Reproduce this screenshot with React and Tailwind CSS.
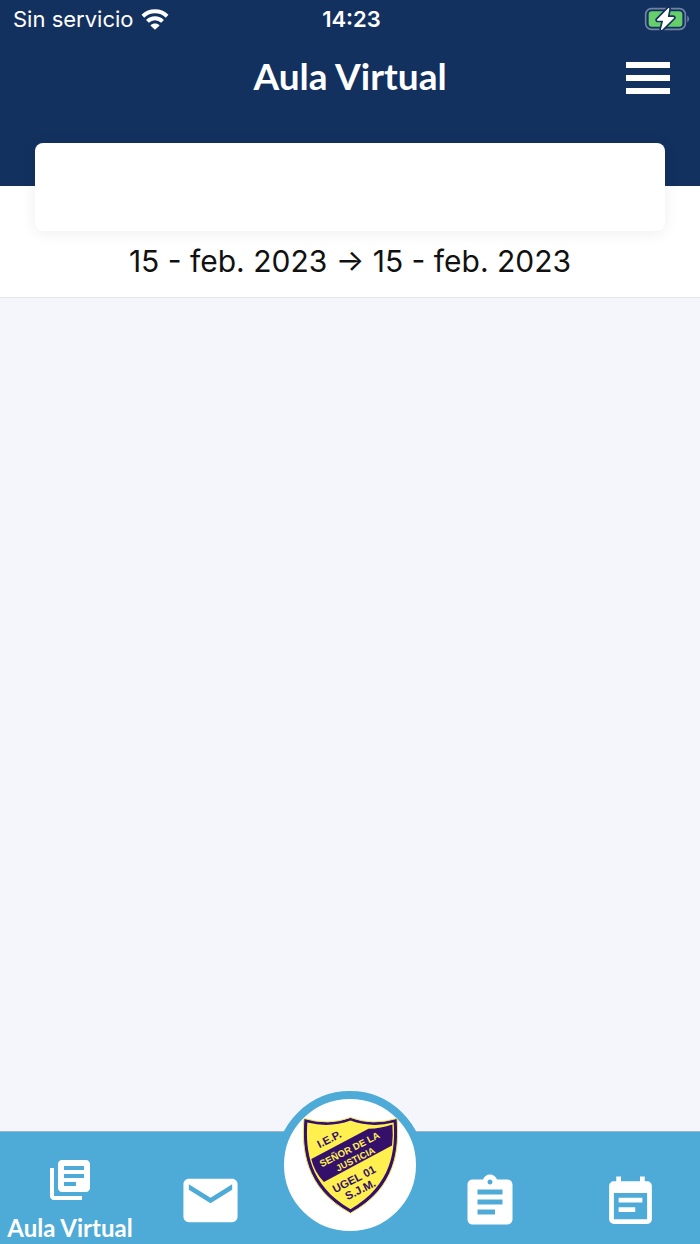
import { MdAssignment, MdEmail, MdEventNote, MdLibraryBooks } from "react-icons/md";

function WifiIcon() {
  return (
    <svg viewBox="0 0 84 64" className="w-7 h-[21px]" aria-hidden="true">
      <g fill="none" stroke="#fff" strokeWidth="12">
        <path d="M5 22C26 2 58 2 79 22" />
        <path d="M19 38C32 25 52 25 65 38" />
      </g>
      <path d="M42 63L28 50C36 42 48 42 56 50Z" fill="#fff" />
    </svg>
  );
}

function BatteryIcon() {
  return (
    <svg viewBox="0 0 138 72" className="w-[46px] h-6" role="img" aria-label="Cargando">
      <rect x="5" y="5" width="119" height="62" rx="17" fill="none" stroke="#7284a5" strokeWidth="5" />
      <path d="M130 26q5 3 5 10t-5 10z" fill="#7284a5" />
      <rect x="14" y="13" width="101" height="46" rx="9" fill="#66cf6a" />
      <path
        d="M74 5L41 39H60L53 67L88 32H69Z"
        fill="#fff"
        stroke="#13315f"
        strokeWidth="14"
        strokeLinejoin="round"
        paintOrder="stroke"
      />
      <path
        d="M74 5L41 39H60L53 67L88 32H69Z"
        fill="#fff"
        stroke="#fff"
        strokeWidth="4"
        strokeLinejoin="round"
      />
    </svg>
  );
}

function StatusBar() {
  return (
    <div className="grid grid-cols-3 items-center h-[38px] pl-[13px] pr-[10px] text-[22px] leading-7">
      <div className="flex items-center gap-2 whitespace-nowrap">
        <span>Sin servicio</span>
        <WifiIcon />
      </div>
      <span className="text-center font-semibold">14:23</span>
      <div className="flex justify-end">
        <BatteryIcon />
      </div>
    </div>
  );
}

function Header() {
  return (
    <header className="h-[186px] bg-[#13315f] text-white">
      <StatusBar />
      <div className="grid grid-cols-[1fr_auto_1fr] items-center h-20 px-[30px]">
        <h1 className="col-start-2 pb-1 font-['Lato','Liberation_Sans',sans-serif] text-[37px] leading-10 font-bold">
          Aula Virtual
        </h1>
        <button type="button" aria-label="Menú" className="justify-self-end flex flex-col gap-[7px]">
          <span className="w-11 h-[6px] bg-white"></span>
          <span className="w-11 h-[6px] bg-white"></span>
          <span className="w-11 h-[6px] bg-white"></span>
        </button>
      </div>
    </header>
  );
}

function Shield() {
  return (
    <svg viewBox="80 105 292 300" className="w-[97px] h-[100px]" role="img" aria-label="I.E.P. Señor de la Justicia">
      <path
        d="M86 115Q160 137 226 112Q292 137 366 115C373 205 366 323 226 400C86 323 79 205 86 115Z"
        fill="#34106b"
        stroke="#f3e75c"
        strokeWidth="3"
      />
      <path
        d="M96 127Q164 144 226 121Q288 144 356 127C361 208 353 314 226 388C99 314 91 208 96 127Z"
        fill="#fff04f"
      />
      <path d="M108 237L280 146Q318 145 352 133Q355 166 351 196L146 306Q117 276 108 237Z" fill="#34106b" />
      <g
        textAnchor="middle"
        fontWeight="700"
        className="font-['Liberation_Sans',Arial,sans-serif]"
      >
        <text x="167" y="187" fontSize="33" fill="#34106b" transform="rotate(-27 167 187)">I.E.P.</text>
        <text x="228" y="217" fontSize="29" fill="#fff04f" transform="rotate(-27 228 217)">SEÑOR DE LA</text>
        <text x="245" y="246" fontSize="28" fill="#fff04f" transform="rotate(-27 245 246)">JUSTICIA</text>
        <text x="242" y="308" fontSize="34" fill="#34106b" transform="rotate(-27 242 308)">UGEL 01</text>
        <text x="261" y="339" fontSize="34" fill="#34106b" transform="rotate(-27 261 339)">S.J.M.</text>
      </g>
    </svg>
  );
}

function BottomNav() {
  return (
    <nav className="grid grid-cols-5 h-[113px] bg-[#4eaad6] border-t border-[#9fb4c6] text-white">
      <a href="#aula" aria-current="page" className="flex flex-col items-center pt-6">
        <MdLibraryBooks className="size-12" aria-hidden="true" />
        <span className="mt-2 font-['Lato','Liberation_Sans',sans-serif] text-2xl leading-8 font-bold whitespace-nowrap">
          Aula Virtual
        </span>
      </a>
      <a href="#mensajes" aria-label="Mensajes" className="flex justify-center items-center pt-6">
        <MdEmail className="size-[65px]" />
      </a>
      <a href="#inicio" aria-label="Inicio" className="flex justify-center">
        <span className="-mt-[41px] size-[148px] shrink-0 rounded-full border-8 border-[#4eaad6] bg-white flex items-center justify-center">
          <Shield />
        </span>
      </a>
      <a href="#tareas" aria-label="Tareas" className="flex justify-center items-center pt-7">
        <MdAssignment className="size-[60px]" />
      </a>
      <a href="#agenda" aria-label="Agenda" className="flex justify-center items-center pt-7">
        <MdEventNote className="size-[57px]" />
      </a>
    </nav>
  );
}

export default function App() {
  return (
    <div className="min-h-screen flex flex-col bg-[#f5f6fb] font-['Inter','Liberation_Sans',sans-serif]">
      <Header />
      <section className="bg-white border-b border-[#e3e6ee] px-[35px] pb-4">
        <input
          type="text"
          aria-label="Curso"
          className="block w-full h-[88px] -mt-[43px] px-6 rounded-lg bg-white text-2xl outline-none shadow-[0_2px_16px_rgba(0,0,0,0.07)]"
        />
        <p className="mt-2.5 text-center text-[30px] leading-10 text-[#111]">
          15 - feb. 2023 → 15 - feb. 2023
        </p>
      </section>
      <main className="flex-1"></main>
      <BottomNav />
    </div>
  );
}
